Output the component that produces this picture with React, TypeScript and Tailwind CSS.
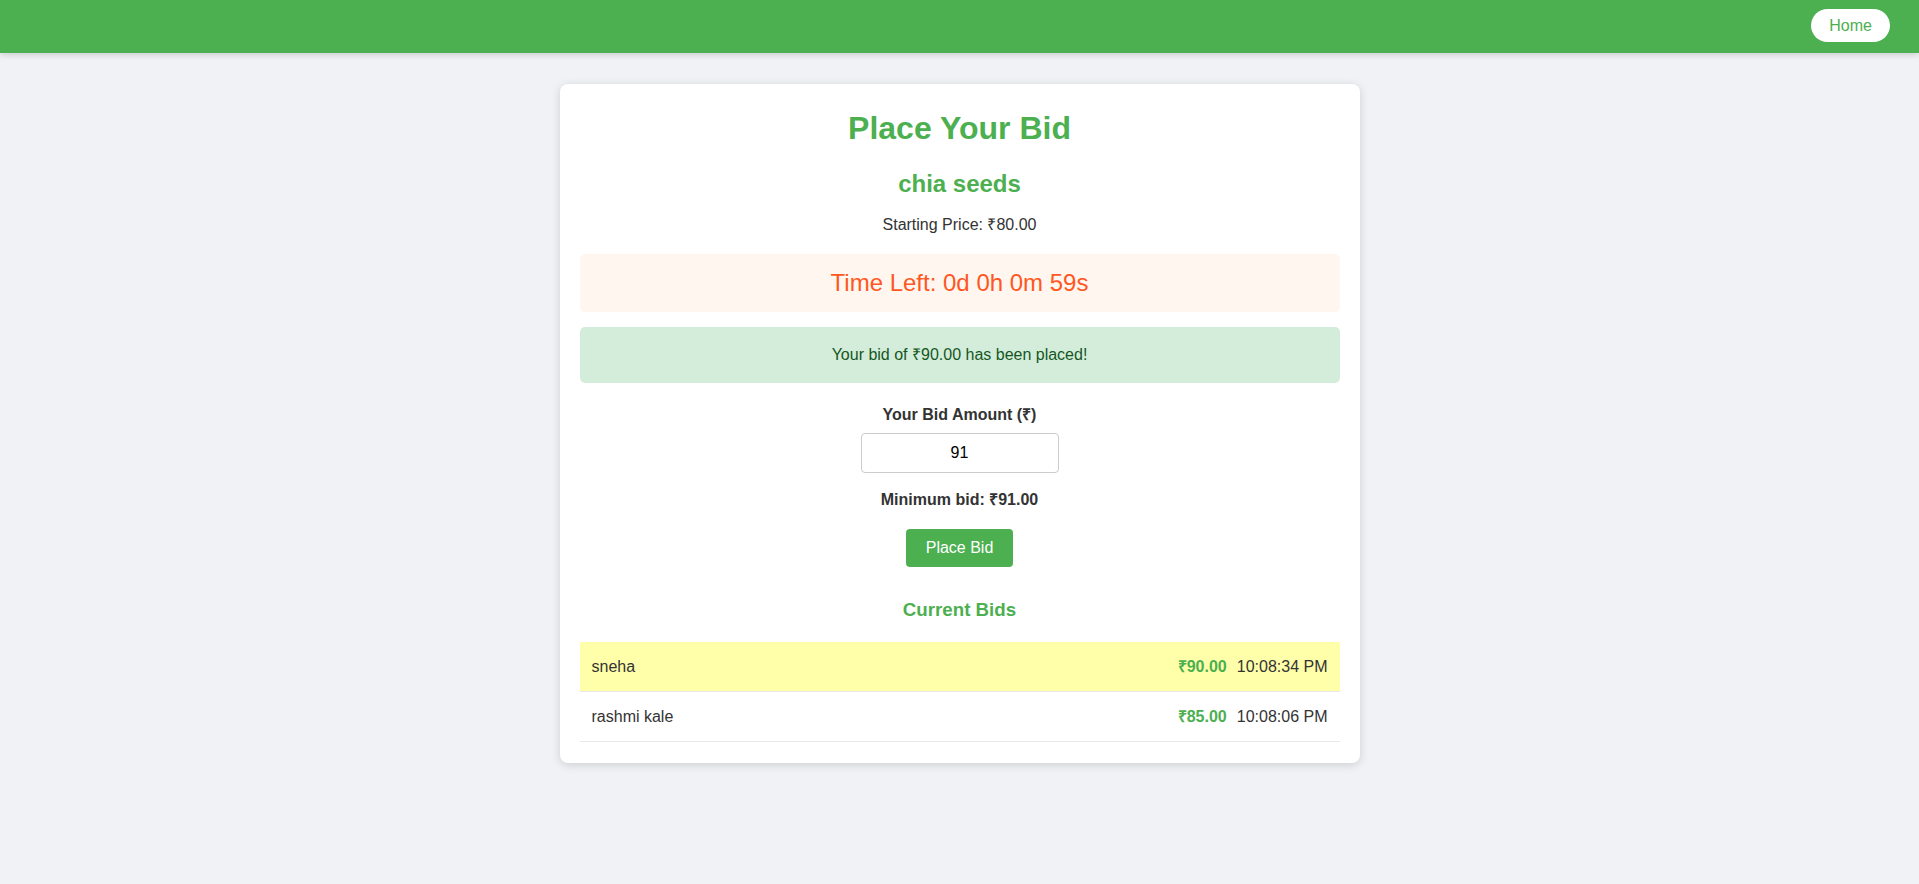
import { useState } from "react";

const bids = [
  { name: "sneha", amount: 90, time: "10:08:34 PM" },
  { name: "rashmi kale", amount: 85, time: "10:08:06 PM" },
];

export default function App() {
  const [amount, setAmount] = useState("91");

  return (
    <div className="min-h-screen bg-[#f0f2f5] text-[#333] font-['Liberation_Sans',Arial,sans-serif]">
      <header className="h-[53px] bg-[#4caf50] flex items-center justify-end pr-[29px] pb-[2px] shadow-[0_2px_6px_rgba(0,0,0,0.15)]">
        <button className="bg-white text-[#4caf50] text-base leading-[18px] px-[18px] py-[7.5px] rounded-full">
          Home
        </button>
      </header>

      <div className="flex justify-center pt-[31px]">
        <div className="w-[800px] bg-white rounded-lg shadow-[0_2px_10px_rgba(0,0,0,0.15)] px-5 pt-[26px] pb-[21px] text-center">
          <h1 className="text-[32px] leading-[37px] font-bold text-[#4caf50]">Place Your Bid</h1>
          <h2 className="mt-[23px] text-2xl leading-[28px] font-bold text-[#4caf50]">chia seeds</h2>
          <p className="mt-[18px] text-base leading-[18px]">Starting Price: ₹80.00</p>

          <div className="mt-5 bg-[#fff6f0] rounded-[5px] h-[58px] flex items-center justify-center text-2xl text-[#ff5722]">
            Time Left: 0d 0h 0m 59s
          </div>

          <div className="mt-[15px] bg-[#d4edda] text-[#155724] rounded-[5px] h-[56px] flex items-center justify-center text-base">
            Your bid of ₹90.00 has been placed!
          </div>

          <div className="mt-[23px] flex flex-col items-center">
            <label className="font-bold text-base leading-[18px]">Your Bid Amount (₹)</label>
            <input
              value={amount}
              onChange={(e) => setAmount(e.target.value)}
              className="mt-[9px] w-[198px] h-[40px] border border-[#ccc] rounded-[4px] text-center text-base text-black outline-none"
            />
            <p className="mt-[18px] font-bold text-base leading-[18px]">Minimum bid: ₹91.00</p>
            <button className="mt-5 bg-[#4caf50] text-white text-base leading-[18px] px-5 py-[10px] rounded-[4px]">
              Place Bid
            </button>
          </div>

          <h3 className="mt-8 text-[18.72px] leading-[22px] font-bold text-[#4caf50]">Current Bids</h3>

          <ul className="mt-[21px] text-left">
            {bids.map((b, i) => (
              <li
                key={b.name}
                className={
                  "flex items-center justify-between px-3 py-[15px] leading-[19px] border-b border-[#e8e8e8] " +
                  (i === 0 ? "bg-[#ffffaa]" : "bg-white")
                }
              >
                <span>{b.name}</span>
                <span className="flex items-center gap-[10px]">
                  <span className="font-bold text-[#4caf50]">₹{b.amount.toFixed(2)}</span>
                  <span>{b.time}</span>
                </span>
              </li>
            ))}
          </ul>
        </div>
      </div>
    </div>
  );
}
